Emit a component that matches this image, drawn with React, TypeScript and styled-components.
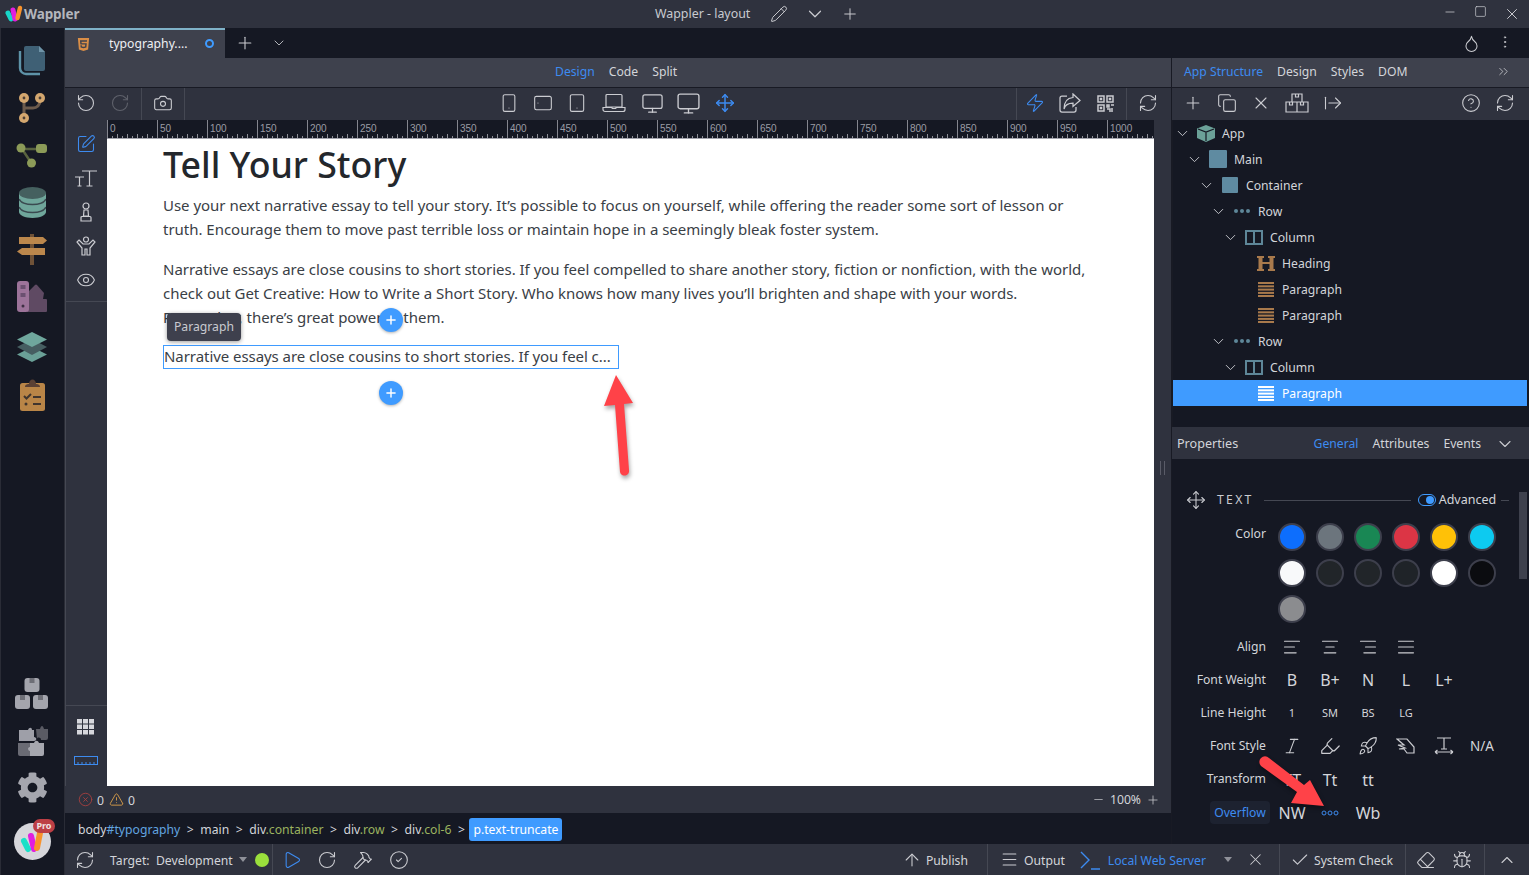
import React from 'react';
import styled, { createGlobalStyle } from 'styled-components';
import {
  Plus, ChevronDown, ChevronUp, Pencil, Minus, Square, X, RotateCcw, RotateCw, Camera, Smartphone, Tablet,
  Monitor, Move, Zap, RefreshCw, Copy, CircleHelp, ArrowRightFromLine, Eye, Droplet, EllipsisVertical,
  ChevronsRight, SquarePen, CircleX, TriangleAlert, Play, Hammer, CircleCheck, ArrowUp, Menu, Eraser, Bug, Check,
  Italic, Highlighter, Rocket, AlignLeft, AlignCenter, AlignRight, AlignJustify,
} from 'lucide-react';
import { FaHtml5, FaCog } from 'react-icons/fa';

const C = {
  dark: '#151823', panel: '#2f323e', head: '#3e414d', line: '#181a24', sep: '#454853',
  text: '#d3d5da', icon: '#cbccd1', blue: '#3f9bff', link: '#3d8bf0',
};
const ui = `"Noto Sans", "Liberation Sans", sans-serif`;

const Global = createGlobalStyle`
  html, body { margin: 0; padding: 0; background: ${C.dark}; overflow: hidden; }
  * { box-sizing: border-box; }
  svg { display: block; flex: none; }
`;

const Shell = styled.div`
  position: relative; width: 1529px; height: 875px; display: flex; flex-direction: column;
  overflow: hidden; font: 12.2px/18px ${ui}; color: ${C.text};
`;
const TitleBar = styled.header`
  height: 28px; background: ${C.panel}; display: flex; align-items: center; padding-left: 5px;
`;
const Brand = styled.div`display: flex; align-items: center; gap: 1px; width: 600px; font-size: 13.5px; font-weight: 700; color: #b4b6bc; letter-spacing: -.1px;`;
const AppTitle = styled.div`width: 124px; margin-left: 50px; color: #c8cad0; white-space: nowrap; font-size: 12.4px;`;
const TitleIcon = styled.div<{ $w: number }>`width: ${p => p.$w}px; display: flex; justify-content: center;`;
const WinCtl = styled.div`margin-left: auto; display: flex; padding-right: 2px;`;
const WinBtn = styled.div`width: 31px; display: flex; justify-content: center;`;
const Body = styled.div`flex: 1; display: flex; min-height: 0;`;
const Rail = styled.nav`
  width: 65px; flex: none; background: ${C.dark}; border-left: 1px solid #2a2c36; border-right: 1px solid #2a2c36;
  display: flex; flex-direction: column; align-items: center;
`;
const RailGroup = styled.div`display: flex; flex-direction: column; align-items: center; width: 100%;`;
const RailTop = styled(RailGroup)`padding-top: 9px;`;
const RailBottom = styled(RailGroup)`margin-top: auto; padding-bottom: 4px;`;
const RailSlot = styled.div<{ $h: number }>`height: ${p => p.$h}px; display: flex; align-items: center; justify-content: center; padding-right: 1px;`;
const Avatar = styled.div`position: relative; width: 37px; height: 37px; border-radius: 50%; background: #d6d6db; display: flex; align-items: center; justify-content: center;`;
const ProBadge = styled.span`position: absolute; right: -4px; top: -4px; background: #bd3f45; color: #f0e2e3; border-radius: 8px; font-size: 9px; font-weight: 700; line-height: 14px; padding: 0 3px;`;
const Main = styled.div`flex: 1; display: flex; flex-direction: column; min-width: 0;`;
const TabStrip = styled.div`height: 30px; display: flex; background: ${C.dark}; align-items: center;`;
const FileTab = styled.div`
  width: 160px; height: 30px; background: ${C.head}; border-top: 2px solid #7fb2c8; display: flex; align-items: center;
  padding: 0 0 0 11px; color: #eef0f4;
`;
const TabName = styled.span`margin-left: 18px; width: 96px; white-space: nowrap;`;
const Dot = styled.span`width: 9px; height: 9px; border: 2px solid ${C.blue}; border-radius: 50%; margin-top: -2px;`;
const StripBtn = styled.div<{ $w?: number }>`width: ${p => p.$w ?? 34}px; display: flex; justify-content: center;`;
const StripEnd = styled.div`margin-left: auto; display: flex; margin-right: 7px;`;
const Work = styled.div`flex: 1; display: flex; min-height: 0;`;
const Center = styled.section`width: 1107px; flex: none; display: flex; flex-direction: column; border-right: 1px solid ${C.line};`;
const ModeBar = styled.div`height: 30px; flex: none; background: ${C.head}; border-bottom: 1px solid ${C.line}; display: flex; padding: 0 0 2px 490px; gap: 14px; align-items: center;`;
const Tab = styled.span<{ $on?: boolean }>`color: ${p => (p.$on ? C.link : C.text)}; white-space: nowrap;`;
const Toolbar = styled.div`height: 32px; flex: none; background: ${C.panel}; display: flex; align-items: center; padding: 0 6px 0 4px;`;
const Tool = styled.div<{ $w?: number; $dim?: boolean }>`width: ${p => p.$w ?? 34}px; height: 30px; flex: none; display: flex; align-items: center; justify-content: center; opacity: ${p => (p.$dim ? .3 : 1)};`;
const BarTool = styled(Tool)`height: 32px; padding-bottom: 2px;`;
const VLine = styled.div<{ $l?: number; $r?: number }>`width: 1px; height: 100%; background: ${C.sep}; margin: 0 ${p => p.$r ?? 4}px 0 ${p => p.$l ?? 4}px; flex: none;`;
const Push = styled.div<{ $ml: number | 'auto' }>`display: flex; align-items: center; height: 100%; margin-left: ${p => (p.$ml === 'auto' ? 'auto' : `${p.$ml}px`)};`;
const Design = styled.div`flex: 1; display: flex; min-height: 0; background: ${C.panel};`;
const Tools = styled.aside`width: 42px; flex: none; display: flex; flex-direction: column; border-left: 1px solid ${C.sep};`;
const ToolsTop = styled.div`height: 182px; padding-top: 7px; border-bottom: 1px solid ${C.sep}; display: flex; flex-direction: column; align-items: center;`;
const ToolsBottom = styled.div`margin-top: auto; border-top: 1px solid ${C.sep}; height: 81px; padding-top: 4px; display: flex; flex-direction: column; align-items: center;`;
const SideTool = styled.div`height: 34px; display: flex; align-items: center; justify-content: center; padding-right: 2px;`;
const Stage = styled.div`width: 1047px; flex: none; display: flex; flex-direction: column;`;
const Ruler = styled.div`height: 19px; flex: none; display: flex; overflow: hidden; background: ${C.dark}; border-bottom: 1px solid #a3a4ad;`;
const RulerCell = styled.div`
  width: 50px; flex: none; border-left: 1px solid #84858e; padding: 2px 0 0 2px; font-size: 10px; line-height: 13px; color: #9b9ca5; font-family: "Liberation Sans", sans-serif;
  background:
    repeating-linear-gradient(to right, transparent 0 4px, #8d8e97 4px 5px) left bottom / 100% 2px no-repeat,
    repeating-linear-gradient(to right, transparent 0 9px, #8d8e97 9px 10px) left bottom / 100% 4px no-repeat;
`;
const Page = styled.article`position: relative; flex: 1; background: #fff; padding: 0 0 0 56px; color: #3a4046; overflow: hidden; font-size: 15px; line-height: 24px;`;
const H1 = styled.h1`margin: 0 0 8px; height: 46px; font-size: 35.7px; line-height: 50px; font-weight: 500; color: #23272c; white-space: nowrap;`;
const Para = styled.p`margin: 0 0 16px; white-space: nowrap; letter-spacing: -.02px;`;
const Truncated = styled.p`margin: 0; width: 456px; height: 24px; border: 1px solid ${C.blue}; line-height: 21px; overflow: hidden; white-space: nowrap; letter-spacing: -.06px;`;
const PageTip = styled.div`position: absolute; left: 60px; top: 174px; width: 74px; height: 28px; background: #3e404d; color: #c9cad0; font-size: 12.2px; line-height: 28px; text-align: center; border-radius: 4px; box-shadow: 0 1px 4px rgba(0,0,0,.4);`;
const Fab = styled.div<{ $top: number }>`position: absolute; left: 272px; top: ${p => p.$top}px; width: 24px; height: 24px; border-radius: 50%; background: ${C.blue}; display: flex; align-items: center; justify-content: center; box-shadow: 0 1px 3px rgba(0,0,0,.3);`;
const Gutter = styled.div`flex: 1; display: flex; align-items: center; justify-content: center;`;
const Grip = styled.div`width: 5px; height: 14px; margin-top: 30px; border-left: 1px solid #5a5c68; border-right: 1px solid #5a5c68;`;
const StatusBar = styled.div`height: 27px; flex: none; background: ${C.panel}; display: flex; align-items: center; padding: 0 11px 0 13px; gap: 3px;`;
const Zoom = styled.div`margin-left: auto; display: flex; align-items: center; gap: 5px; color: ${C.text};`;
const Crumbs = styled.div`height: 31px; flex: none; background: ${C.dark}; display: flex; align-items: center; padding: 2px 0 0 13px; white-space: nowrap;`;
const CrumbSep = styled.span`width: 20px; text-align: center; color: ${C.text};`;
const CrumbId = styled.span`color: #62a5e0;`;
const CrumbClass = styled.span`color: #9bb35f;`;
const CrumbOn = styled.span`background: ${C.blue}; color: #fff; border-radius: 3px; padding: 0 4px; line-height: 23px; margin: -1px 0 0 -2px;`;
const Right = styled.aside`flex: 1; min-width: 0; display: flex; flex-direction: column; background: ${C.dark}; position: relative;`;
const RightTabs = styled.div`height: 30px; flex: none; background: ${C.head}; border-bottom: 1px solid ${C.line}; display: flex; align-items: center; padding: 0 18px 2px 12px; gap: 14px;`;
const RightTools = styled.div`height: 32px; flex: none; background: ${C.panel}; display: flex; align-items: center; padding: 0 7px 0 4px;`;
const Tree = styled.div`height: 307px; flex: none; overflow: hidden; border-left: 1px solid ${C.line};`;
const TreeRow = styled.div<{ $level: number; $on?: boolean }>`
  height: 26px; display: flex; align-items: center; padding-left: ${p => 2 + p.$level * 12}px; margin-right: 2px;
  background: ${p => (p.$on ? C.blue : 'transparent')}; color: ${p => (p.$on ? '#fff' : C.text)};
`;
const TreeLabel = styled.span`padding-top: 2px;`;
const Caret = styled.div`width: 14px; flex: none; display: flex; justify-content: center;`;
const NodeIcon = styled.div`width: 33px; flex: none; display: flex; justify-content: center;`;
const PropHead = styled.div`height: 32px; flex: none; background: ${C.panel}; display: flex; align-items: center; padding: 2px 14px 0 5px; gap: 14px;`;
const PropHeadTitle = styled.span`margin-right: auto; font-size: 12.6px;`;
const Props = styled.div`flex: 1; position: relative; padding-top: 31px; overflow: hidden;`;
const Scroll = styled.div`position: absolute; right: 2px; top: 33px; width: 8px; height: 87px; background: #3e414d;`;
const SectionHead = styled.div`display: flex; align-items: center; height: 20px; padding-left: 14px; margin-bottom: 9px;`;
const SectionTitle = styled.span`margin-left: 11px; letter-spacing: 2.3px; color: ${C.icon}; font-size: 12.2px;`;
const Rule = styled.div<{ $w: number }>`height: 1px; width: ${p => p.$w}px; background: ${C.sep};`;
const TitleRule = styled(Rule)`margin-left: 10px;`;
const Toggle = styled.span`position: relative; width: 18px; height: 12px; border: 1px solid ${C.blue}; border-radius: 7px; margin-left: 7px;`;
const Knob = styled.span`position: absolute; right: 1px; top: 1px; width: 8px; height: 8px; border-radius: 50%; background: ${C.blue};`;
const Adv = styled.span`margin: 0 5px 0 3px; white-space: nowrap; font-size: 12.5px;`;
const PropRow = styled.div`display: flex; align-items: center; min-height: 33.2px;`;
const PropLabel = styled.div`width: 94px; flex: none; text-align: right; margin-right: 7px; white-space: nowrap; color: ${C.text};`;
const OverflowLabel = styled.div`width: 60px; margin: 0 3px 0 38px; height: 23px; line-height: 23px; flex: none; text-align: center; background: #1d2230; border-radius: 4px; color: ${C.link}; white-space: nowrap;`;
const Cell = styled.div<{ $big?: boolean; $small?: boolean; $blue?: boolean }>`
  width: 38px; flex: none; display: flex; justify-content: center; align-items: center; white-space: nowrap; padding-top: ${p => (p.$big ? 1 : 0)}px;
  font-size: ${p => (p.$big ? 16 : p.$small ? 11 : 13.5)}px; color: ${p => (p.$blue ? C.link : C.text)};
`;
const Swatches = styled.div`display: flex; flex-wrap: wrap; width: 228px; align-content: flex-start;`;
const SwatchCell = styled.div`width: 38px; height: 36px; display: flex; align-items: center; justify-content: center;`;
const Swatch = styled.span<{ $c: string }>`width: 28px; height: 28px; border-radius: 50%; background: ${p => p.$c}; border: 2px solid #3d3f4c;`;
const ColorBlock = styled.div`display: flex; align-items: flex-start; height: 111px;`;
const ColorLabel = styled(PropLabel)`padding-top: 6px;`;
const BottomBar = styled.footer`height: 31px; flex: none; background: ${C.panel}; display: flex; align-items: center; padding-left: 3px;`;
const BarText = styled.span<{ $blue?: boolean; $ml?: number }>`color: ${p => (p.$blue ? C.link : C.text)}; margin-left: ${p => p.$ml ?? 0}px; padding-top: 2px; white-space: nowrap;`;
const Caret2 = styled.span<{ $ml?: number }>`width: 0; height: 0; border: 4px solid transparent; border-top: 5px solid #8f9199; border-bottom: 0; margin-left: ${p => p.$ml ?? 6}px; flex: none;`;
const Led = styled.span`width: 14px; height: 14px; border-radius: 50%; background: #9be03c; margin: 0 3px 0 8px; flex: none;`;
const Annotation = styled.svg<{ $x: number; $y: number }>`position: absolute; left: ${p => p.$x}px; top: ${p => p.$y}px; pointer-events: none; overflow: visible; filter: drop-shadow(1px 3px 2px rgba(0,0,0,.35));`;

const line = { size: 20, strokeWidth: 1.3, color: C.icon };
const blueLine = { ...line, color: C.link };

const Logo = () => (
  <svg width="18" height="18" viewBox="0 0 18 18">
    <path d="M3 8 L6 14" stroke="#18d6c8" strokeWidth="5" strokeLinecap="round" />
    <path d="M8 5 L10 14" stroke="#e11ee0" strokeWidth="5" strokeLinecap="round" />
    <path d="M15 3 L12.500 13" stroke="#f9922b" strokeWidth="4.500" strokeLinecap="round" />
  </svg>
);
const FilesIcon = () => (
  <svg width="28" height="31" viewBox="0 0 28 31">
    <path d="M2 6v17a6 6 0 0 0 6 6h14" fill="none" stroke="#5e93a8" strokeWidth="2.400" />
    <path d="M8 1h13l6 6v17a2 2 0 0 1-2 2H8a2 2 0 0 1-2-2V3a2 2 0 0 1 2-2z" fill="#3f6075" />
    <path d="M21 1l6 6h-6z" fill="#6f94a8" />
  </svg>
);
const BranchIcon = () => (
  <svg width="28" height="32" viewBox="0 0 28 32">
    <path d="M6 6v20M22 6v3a7 7 0 0 1-7 7H6" fill="none" stroke="#6d5b4c" strokeWidth="3" />
    {[[6, 6], [22, 6], [6, 26]].map(([x, y]) => <g key={`${x}${y}`}><circle cx={x} cy={y} r="5" fill="#d4a76f" /><circle cx={x} cy={y} r="1.400" fill="#4c3f35" /></g>)}
  </svg>
);
const GraphIcon = () => (
  <svg width="32" height="26" viewBox="0 0 32 26">
    <path d="M6 6h20M6 6l10 15" fill="none" stroke="#59633f" strokeWidth="2.500" />
    <circle cx="5" cy="5" r="4.500" fill="#8c9b58" /><rect x="20" y="1" width="11" height="9" rx="3" fill="#8c9b58" /><circle cx="15.500" cy="20" r="4.500" fill="#8c9b58" />
  </svg>
);
const DbIcon = () => (
  <svg width="27" height="31" viewBox="0 0 27 31">
    <path d="M0 6v19c0 3 6 6 13.500 6S27 28 27 25V6z" fill="#6fa69b" />
    <ellipse cx="13.500" cy="6" rx="13.500" ry="6" fill="#45605f" />
    <path d="M0 12c2 4 7 5.500 13.500 5.500S25 16 27 12M0 20c2 4 7 5.500 13.500 5.500S25 24 27 20" fill="none" stroke="#3a4a50" strokeWidth="1.600" />
  </svg>
);
const SignIcon = () => (
  <svg width="30" height="31" viewBox="0 0 30 31">
    <rect x="13" y="0" width="4" height="31" fill="#6f5238" />
    <path d="M2 3h24l4 3.500-4 3.500H2z" fill="#bb874c" /><path d="M28 14H5l-5 3.500 5 3.500h23z" fill="#bb874c" />
  </svg>
);
const SwatchIcon = () => (
  <svg width="30" height="31" viewBox="0 0 30 31">
    <path d="M12 10l6-6a1.500 1.500 0 0 1 2 0l7 8-1 6h3a1 1 0 0 1 1 1v11a1 1 0 0 1-1 1H10z" fill="#5f4a63" />
    <rect x="0" y="0" width="12" height="31" rx="3" fill="#9c7399" />
    <rect x="3.500" y="4" width="5" height="4" fill="#6b5070" /><rect x="3.500" y="12" width="5" height="4" fill="#6b5070" /><circle cx="6" cy="25" r="1.500" fill="#3e2f44" />
  </svg>
);
const LayersIcon = () => (
  <svg width="30" height="30" viewBox="0 0 30 30">
    <path d="M15 15l15 7.500L15 30 0 22.500z" fill="#6aa097" /><path d="M15 7l15 8-15 8-15-8z" fill="#465e61" /><path d="M15 0l15 7.500L15 15 0 7.500z" fill="#6fa79d" />
  </svg>
);
const ClipIcon = () => (
  <svg width="25" height="33" viewBox="0 0 25 33">
    <rect x="0" y="5" width="25" height="28" rx="2.500" fill="#b98547" />
    <path d="M5 9c0-3 3-3 4-3 0-6 7-6 7 0 1 0 4 0 4 3z" fill="#5a4034" />
    <path d="M4 18l2.500 2.500L11 16M13 19h8M13 26h8" fill="none" stroke="#40352e" strokeWidth="2" /><circle cx="6" cy="26" r="1.500" fill="#40352e" />
  </svg>
);
const Box = ({ x, y }: { x: number; y: number }) => (
  <g><rect x={x} y={y} width="15" height="14" rx="3" fill="#a4a5ad" /><rect x={x + 5} y={y} width="5" height="5" fill="#6e6f77" /></g>
);
const PackIcon = () => <svg width="34" height="31" viewBox="0 0 34 31"><Box x={9.500} y={0} /><Box x={0} y={17} /><Box x={18} y={17} /></svg>;
const PuzzleIcon = () => (
  <svg width="31" height="31" viewBox="0 0 31 31">
    <path d="M2 5h9c1-3 4-3 4 0h2v7c3 0 3 4 0 4H2a2 2 0 0 1 0-1z" fill="#9e9fa8" /><path d="M1 18h12v13H3a2 2 0 0 1-2-2z" fill="#6a6b74" />
    <path d="M13 18h4c1-3 4-3 5 0h5v11a2 2 0 0 1-2 2H13v-5c-2 0-3-4 0-4z" fill="#a6a7af" /><path d="M19 4h4c1-4 3-4 4 0h4v9a2 2 0 0 1-2 2h-5c0-3-4-3-4-1z" fill="#5a5b64" />
  </svg>
);
const AvatarW = () => (
  <svg width="24" height="24" viewBox="0 0 24 24">
    <path d="M4 12l4 8" stroke="#18e0c8" strokeWidth="6" strokeLinecap="round" /><path d="M11 7l3 13" stroke="#e11ee0" strokeWidth="6" strokeLinecap="round" /><path d="M20 4l-3 15" stroke="#f9922b" strokeWidth="6" strokeLinecap="round" />
  </svg>
);
const TypeIcon = () => (
  <svg width="24" height="20" viewBox="0 0 24 20" fill="none" stroke={C.icon} strokeWidth="1.200">
    <path d="M8 3h15M15.500 3v15M12.500 18h6M1 9h9M5.500 9v9M3.500 18h4" />
  </svg>
);
const PawnIcon = () => (
  <svg width="14" height="20" viewBox="0 0 14 20" fill="none" stroke={C.icon} strokeWidth="1.200">
    <circle cx="7" cy="4" r="3" /><path d="M5 8h4l.5 6H4.500zM3 14.500h8a1 1 0 0 1 1 1V19H2v-3.500a1 1 0 0 1 1-1z" />
  </svg>
);
const FigureIcon = () => (
  <svg width="20" height="20" viewBox="0 0 20 20" fill="none" stroke={C.icon} strokeWidth="1.200">
    <circle cx="10" cy="3.500" r="2.500" /><path d="M3 4l4 4h6l4-4 2 2-5 6v7h-3v-6H9v6H6v-7L1 6z" />
  </svg>
);
const ShareIcon = () => (
  <svg width="22" height="20" viewBox="0 0 22 20" fill="none" stroke={C.icon} strokeWidth="1.250">
    <path d="M8 3H3a2 2 0 0 0-2 2v12a2 2 0 0 0 2 2h12a2 2 0 0 0 2-2v-3" /><path d="M14 1l7 6.500-7 6V10c-5 0-8 2-9 6 0-7 3-11 9-11.500z" />
  </svg>
);
const QrIcon = () => (
  <svg width="17" height="17" viewBox="0 0 17 17" fill="none" stroke={C.icon} strokeWidth="1.500">
    <rect x="1" y="1" width="6" height="6" /><rect x="10" y="1" width="6" height="6" /><rect x="1" y="10" width="6" height="6" />
    <path d="M10 10h2v2h-2zM14 10h3M10 14h3v3M15 13v4" />
    <rect x="3.500" y="3.500" width="1" height="1" /><rect x="12.500" y="3.500" width="1" height="1" /><rect x="3.500" y="12.500" width="1" height="1" />
  </svg>
);
const LaptopIcon = () => (
  <svg width="24" height="20" viewBox="0 0 24 20" fill="none" stroke={C.icon} strokeWidth="1.200">
    <path d="M5 1.500h14a1 1 0 0 1 1 1V14H4V2.500a1 1 0 0 1 1-1zM1 14.500h8.500l1 1h3l1-1H23v2a2 2 0 0 1-2 2H3a2 2 0 0 1-2-2z" />
  </svg>
);
const PacksOutline = () => (
  <svg width="24" height="20" viewBox="0 0 24 20" fill="none" stroke={C.icon} strokeWidth="1.200">
    <path d="M7 1h10v8H7zM1 9h11v10H1zM12 9h11v10H12zM10.500 1v3h3V1M4.500 9v3h3V9M15.500 9v3h3V9" />
  </svg>
);
const RulerSmall = () => (
  <svg width="24" height="10" viewBox="0 0 24 10" fill="none" stroke={C.link} strokeWidth="1">
    <rect x=".5" y=".5" width="23" height="8" /><path d="M4 9V6M8 9V6M12 9V6M16 9V6M20 9V6" />
  </svg>
);
const Grid3 = () => (
  <svg width="18" height="16" viewBox="0 0 18 16" fill="#d6d7dc">
    {[0, 6, 12].flatMap(x => [0, 5.500, 11].map(y => <rect key={`${x}-${y}`} x={x} y={y} width="5" height="4.500" />))}
  </svg>
);
const TermIcon = () => (
  <svg width="28" height="20" viewBox="0 0 28 20" fill="none" stroke={C.link} strokeWidth="1.400" style={{ marginLeft: 15 }}><path d="M1 2l8 8-8 8M11 19h9" /></svg>
);
const TextWidth = () => (
  <svg width="20" height="20" viewBox="0 0 20 20" fill="none" stroke={C.icon} strokeWidth="1.200">
    <path d="M3 2h14M10 2v11M7 13h6M1 16h18M1 16l2.500-2M1 16l2.500 2M19 16l-2.500-2M19 16l-2.500 2" />
  </svg>
);
const HandIcon = () => (
  <svg width="20" height="20" viewBox="0 0 20 20" fill="none" stroke={C.icon} strokeWidth="1.200">
    <path d="M1 3h10l7 8v6h-7l-3-4H3l6-1-7-3h6L1 3z" />
  </svg>
);
const CubeIcon = () => (
  <svg width="18" height="17" viewBox="0 0 18 17">
    <path d="M9 0l9 3.500v9.500l-9 4-9-4V3.500z" fill="#6ba198" /><path d="M1 4l8 3 8-3M9 7v9" fill="none" stroke="#151823" strokeWidth="1.200" />
  </svg>
);
const DotsIcon = ({ c = '#5e8799', hollow }: { c?: string; hollow?: boolean }) => (
  <svg width="18" height="6" viewBox="0 0 18 6">
    {[3, 9, 15].map(x => <circle key={x} cx={x} cy="3" r="2" fill={hollow ? 'none' : c} stroke={c} strokeWidth={hollow ? 1 : 0} />)}
  </svg>
);
const ColumnIcon = () => (
  <svg width="18" height="15" viewBox="0 0 18 15" fill="none" stroke="#5e8799" strokeWidth="2"><rect x="1" y="1" width="16" height="13" /><path d="M9 1v13" /></svg>
);
const SquareNode = ({ s }: { s: number }) => <svg width={s} height={s} viewBox="0 0 10 10"><rect width="10" height="10" rx=".6" fill="#5f8ba1" /></svg>;
const HeadingIcon = () => (
  <svg width="18" height="15" viewBox="0 0 18 15" fill="#a97a4c"><path d="M0 0h7v2H5.500v4h7V2H11V0h7v2h-1.500v11H18v2h-7v-2h1.500V8h-7v5H7v2H0v-2h1.500V2H0z" /></svg>
);
const ParaIcon = ({ c = '#a97a4c' }: { c?: string }) => (
  <svg width="16" height="15" viewBox="0 0 16 15" fill={c}>{[0, 3.300, 6.600, 9.900, 13].map(y => <rect key={y} y={y} width="16" height="2" />)}</svg>
);

const tree: { l: number; t: string; icon: React.ReactNode; open?: boolean; on?: boolean }[] = [
  { l: 0, t: 'App', icon: <CubeIcon />, open: true },
  { l: 1, t: 'Main', icon: <SquareNode s={18} />, open: true },
  { l: 2, t: 'Container', icon: <SquareNode s={16} />, open: true },
  { l: 3, t: 'Row', icon: <DotsIcon />, open: true },
  { l: 4, t: 'Column', icon: <ColumnIcon />, open: true },
  { l: 5, t: 'Heading', icon: <HeadingIcon /> },
  { l: 5, t: 'Paragraph', icon: <ParaIcon /> },
  { l: 5, t: 'Paragraph', icon: <ParaIcon /> },
  { l: 3, t: 'Row', icon: <DotsIcon />, open: true },
  { l: 4, t: 'Column', icon: <ColumnIcon />, open: true },
  { l: 5, t: 'Paragraph', icon: <ParaIcon c="#fff" />, on: true },
];
const colors = ['#0d6efd', '#6c757d', '#198754', '#dc3545', '#ffc107', '#0dcaf0', '#f8f9fa', '#212529', '#212529', '#1f2328', '#ffffff', '#0b0c10', '#8b8c8f'];
const marks = Array.from({ length: 21 }, (_, i) => i * 50);

export default function App() {
  return (
    <Shell>
      <Global />
      <TitleBar>
        <Brand><Logo /><span>Wappler</span></Brand>
        <AppTitle>Wappler - layout</AppTitle>
        <TitleIcon $w={0}><Pencil {...line} size={18} /></TitleIcon>
        <TitleIcon $w={72}><ChevronDown {...line} size={22} /></TitleIcon>
        <TitleIcon $w={0}><Plus {...line} size={18} style={{ marginLeft: -2 }} /></TitleIcon>
        <WinCtl>
          <WinBtn><Minus {...line} size={14} /></WinBtn>
          <WinBtn><Square {...line} size={13} /></WinBtn>
          <WinBtn><X {...line} size={18} /></WinBtn>
        </WinCtl>
      </TitleBar>
      <Body>
        <Rail>
          <RailTop>
            <RailSlot $h={47}><FilesIcon /></RailSlot>
            <RailSlot $h={48}><BranchIcon /></RailSlot>
            <RailSlot $h={47}><GraphIcon /></RailSlot>
            <RailSlot $h={47}><DbIcon /></RailSlot>
            <RailSlot $h={47}><SignIcon /></RailSlot>
            <RailSlot $h={47}><SwatchIcon /></RailSlot>
            <RailSlot $h={54}><LayersIcon /></RailSlot>
            <RailSlot $h={40}><ClipIcon /></RailSlot>
          </RailTop>
          <RailBottom>
            <RailSlot $h={47}><PackIcon /></RailSlot>
            <RailSlot $h={47}><PuzzleIcon /></RailSlot>
            <RailSlot $h={47}><FaCog size={31} color="#a5a6ae" /></RailSlot>
            <RailSlot $h={60}><Avatar><AvatarW /><ProBadge>Pro</ProBadge></Avatar></RailSlot>
          </RailBottom>
        </Rail>
        <Main>
          <TabStrip>
            <FileTab><FaHtml5 size={15} color="#d98e47" /><TabName>typography....</TabName><Dot /></FileTab>
            <StripBtn $w={40}><Plus {...line} size={20} /></StripBtn>
            <StripBtn $w={28}><ChevronDown {...line} size={16} /></StripBtn>
            <StripEnd>
              <StripBtn><Droplet {...line} size={19} /></StripBtn>
              <StripBtn><EllipsisVertical {...line} size={16} /></StripBtn>
            </StripEnd>
          </TabStrip>
          <Work>
            <Center>
              <ModeBar><Tab $on>Design</Tab><Tab>Code</Tab><Tab>Split</Tab></ModeBar>
              <Toolbar>
                <BarTool><RotateCcw {...line} /></BarTool>
                <BarTool $dim><RotateCw {...line} /></BarTool>
                <VLine />
                <BarTool><Camera {...line} /></BarTool>
                <VLine />
                <Push $ml={303}>
                  <BarTool><Smartphone {...line} /></BarTool>
                  <BarTool><Tablet {...line} style={{ transform: 'rotate(90deg)' }} /></BarTool>
                  <BarTool><Tablet {...line} /></BarTool>
                  <BarTool $w={40}><LaptopIcon /></BarTool>
                  <BarTool $w={36}><Monitor {...line} size={23} /></BarTool>
                  <BarTool $w={36}><Monitor {...line} size={25} /></BarTool>
                  <BarTool $w={38}><Move {...blueLine} strokeWidth={1.8} /></BarTool>
                </Push>
                <Push $ml="auto">
                  <VLine $l={1} $r={0} />
                  <BarTool $w={35}><Zap {...blueLine} /></BarTool>
                  <BarTool $w={36}><ShareIcon /></BarTool>
                  <BarTool $w={35}><QrIcon /></BarTool>
                  <VLine $l={3} $r={4} />
                  <BarTool $w={34}><RefreshCw {...line} /></BarTool>
                </Push>
              </Toolbar>
              <Design>
                <Tools>
                  <ToolsTop>
                    <SideTool><SquarePen {...blueLine} /></SideTool>
                    <SideTool><TypeIcon /></SideTool>
                    <SideTool><PawnIcon /></SideTool>
                    <SideTool><FigureIcon /></SideTool>
                    <SideTool><Eye {...line} /></SideTool>
                  </ToolsTop>
                  <ToolsBottom>
                    <SideTool><Grid3 /></SideTool>
                    <SideTool><RulerSmall /></SideTool>
                  </ToolsBottom>
                </Tools>
                <Stage>
                  <Ruler>{marks.map(m => <RulerCell key={m}>{m}</RulerCell>)}</Ruler>
                  <Page>
                    <H1>Tell Your Story</H1>
                    <Para>Use your next narrative essay to tell your story. It’s possible to focus on yourself, while offering the reader some sort of lesson or<br />truth. Encourage them to move past terrible loss or maintain hope in a seemingly bleak foster system.</Para>
                    <Para>Narrative essays are close cousins to short stories. If you feel compelled to share another story, fiction or nonfiction, with the world,<br />check out Get Creative: How to Write a Short Story. Who knows how many lives you’ll brighten and shape with your words.<br />Remember, there’s great power in them.</Para>
                    <Truncated>Narrative essays are close cousins to short stories. If you feel c...</Truncated>
                    <PageTip>Paragraph</PageTip>
                    <Fab $top={169}><Plus size={14} color="#fff" strokeWidth={2.5} /></Fab>
                    <Fab $top={242}><Plus size={14} color="#fff" strokeWidth={2.5} /></Fab>
                  </Page>
                </Stage>
                <Gutter><Grip /></Gutter>
              </Design>
              <StatusBar>
                <CircleX size={15} color="#a8403f" strokeWidth={1.4} /><BarText $ml={1}>0</BarText>
                <TriangleAlert size={15} color="#e0a24a" strokeWidth={1.4} style={{ marginLeft: 2 }} /><BarText $ml={1}>0</BarText>
                <Zoom><Minus {...line} size={13} /><span>100%</span><Plus {...line} size={14} /></Zoom>
              </StatusBar>
              <Crumbs>
                <span>body<CrumbId>#typography</CrumbId></span><CrumbSep>&gt;</CrumbSep>
                <span>main</span><CrumbSep>&gt;</CrumbSep>
                <span>div<CrumbClass>.container</CrumbClass></span><CrumbSep>&gt;</CrumbSep>
                <span>div<CrumbClass>.row</CrumbClass></span><CrumbSep>&gt;</CrumbSep>
                <span>div<CrumbClass>.col-6</CrumbClass></span><CrumbSep>&gt;</CrumbSep>
                <CrumbOn>p.text-truncate</CrumbOn>
              </Crumbs>
            </Center>
            <Right>
              <RightTabs>
                <Tab $on>App Structure</Tab><Tab>Design</Tab><Tab>Styles</Tab><Tab>DOM</Tab>
                <ChevronsRight {...line} size={15} style={{ marginLeft: 'auto' }} />
              </RightTabs>
              <RightTools>
                <BarTool><Plus {...line} /></BarTool>
                <BarTool><Copy {...line} /></BarTool>
                <BarTool><X {...line} /></BarTool>
                <BarTool $w={38}><PacksOutline /></BarTool>
                <BarTool><ArrowRightFromLine {...line} /></BarTool>
                <Push $ml="auto">
                  <BarTool><CircleHelp {...line} /></BarTool>
                  <BarTool><RefreshCw {...line} /></BarTool>
                </Push>
              </RightTools>
              <Tree>
                {tree.map((n, i) => (
                  <TreeRow key={i} $level={n.l} $on={n.on}>
                    <Caret>{n.open && <ChevronDown size={17} strokeWidth={1.3} color={C.icon} />}</Caret>
                    <NodeIcon>{n.icon}</NodeIcon>
                    <TreeLabel>{n.t}</TreeLabel>
                  </TreeRow>
                ))}
              </Tree>
              <PropHead>
                <PropHeadTitle>Properties</PropHeadTitle>
                <Tab $on>General</Tab><Tab>Attributes</Tab><Tab>Events</Tab>
                <ChevronDown {...line} size={20} />
              </PropHead>
              <Props>
                <Scroll />
                <SectionHead>
                  <Move {...line} />
                  <SectionTitle>TEXT</SectionTitle>
                  <TitleRule $w={147} />
                  <Toggle><Knob /></Toggle>
                  <Adv>Advanced</Adv>
                  <Rule $w={8} />
                </SectionHead>
                <ColorBlock>
                  <ColorLabel>Color</ColorLabel>
                  <Swatches>{colors.map((c, i) => <SwatchCell key={i}><Swatch $c={c} /></SwatchCell>)}</Swatches>
                </ColorBlock>
                <PropRow><PropLabel>Align</PropLabel>
                  <Cell><AlignLeft {...line} /></Cell><Cell><AlignCenter {...line} /></Cell><Cell><AlignRight {...line} /></Cell><Cell><AlignJustify {...line} /></Cell>
                </PropRow>
                <PropRow><PropLabel>Font Weight</PropLabel>
                  <Cell $big>B</Cell><Cell $big>B+</Cell><Cell $big>N</Cell><Cell $big>L</Cell><Cell $big>L+</Cell>
                </PropRow>
                <PropRow><PropLabel>Line Height</PropLabel>
                  <Cell $small>1</Cell><Cell $small>SM</Cell><Cell $small>BS</Cell><Cell $small>LG</Cell>
                </PropRow>
                <PropRow><PropLabel>Font Style</PropLabel>
                  <Cell><Italic {...line} /></Cell><Cell><Highlighter {...line} size={22} /></Cell><Cell><Rocket {...line} /></Cell><Cell><HandIcon /></Cell><Cell><TextWidth /></Cell><Cell>N/A</Cell>
                </PropRow>
                <PropRow><PropLabel>Transform</PropLabel>
                  <Cell $big>TT</Cell><Cell $big>Tt</Cell><Cell $big>tt</Cell>
                </PropRow>
                <PropRow><OverflowLabel>Overflow</OverflowLabel>
                  <Cell $big>NW</Cell><Cell $blue><DotsIcon c={C.link} hollow /></Cell><Cell $big>Wb</Cell>
                </PropRow>
              </Props>
            </Right>
          </Work>
          <BottomBar>
            <Tool><RefreshCw {...line} /></Tool>
            <BarText $ml={8}>Target:&nbsp; Development</BarText>
            <Caret2 />
            <Led />
            <VLine $l={0} $r={2} />
            <Tool><Play {...blueLine} /></Tool>
            <Tool $w={36}><RotateCw {...line} /></Tool>
            <Tool $w={36}><Hammer {...line} /></Tool>
            <Tool $w={36}><CircleCheck {...line} /></Tool>
            <Push $ml="auto">
              <ArrowUp {...line} />
              <BarText $ml={4}>Publish</BarText>
              <VLine $l={19} $r={12} />
              <Menu {...line} size={19} />
              <BarText $ml={5}>Output</BarText>
              <TermIcon />
              <BarText $blue>Local Web Server</BarText>
              <Caret2 $ml={18} />
              <Tool $w={47}><X {...line} size={19} /></Tool>
              <VLine $l={0} $r={0} />
              <Check {...line} style={{ marginLeft: 10 }} />
              <BarText $ml={4}>System Check</BarText>
              <VLine $l={12} $r={2} />
              <Tool $w={36}><Eraser {...line} /></Tool>
              <Tool $w={35}><Bug {...line} /></Tool>
              <VLine $l={5} $r={0} />
              <Tool $w={44}><ChevronUp {...line} /></Tool>
            </Push>
          </BottomBar>
        </Main>
      </Body>
      <Annotation $x={600} $y={370} width="40" height="110" viewBox="0 0 40 110">
        <path d="M16 5L33 33L24 34L29 100A4.500 4.500 0 0 1 20 102L15 35L4 36z" fill="#ff4248" />
      </Annotation>
      <Annotation $x={1255} $y={755} width="75" height="55" viewBox="0 0 75 55">
        <path d="M14 3L49 30L55 25L69 51L36 48L42 37L6 11A5 5 0 0 1 14 3z" fill="#ff4248" />
      </Annotation>
    </Shell>
  );
}
